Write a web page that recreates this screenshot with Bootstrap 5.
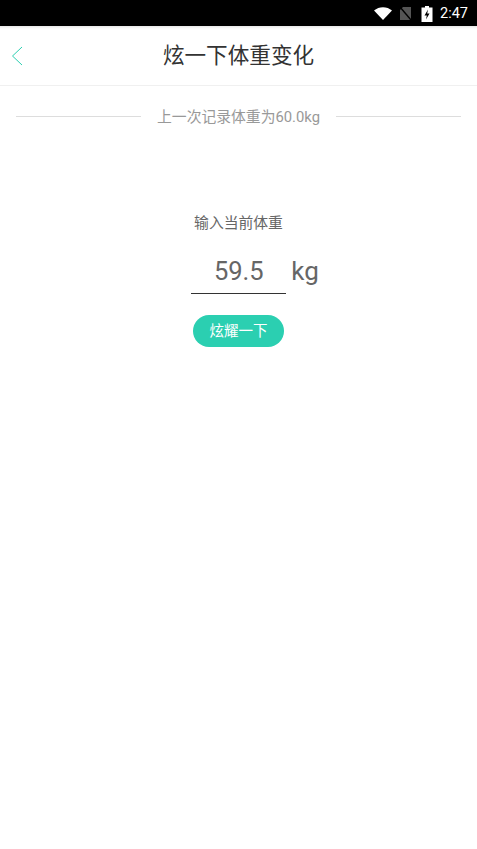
<!doctype html>
<html lang="zh">
<head>
<meta charset="utf-8">
<link href="https://cdn.jsdelivr.net/npm/bootstrap@5.3.0/dist/css/bootstrap.min.css" rel="stylesheet">
<style>
html,body{height:100%;}
body{font-family:Roboto,"Noto Sans CJK SC",sans-serif;background:#fff;color:#333;overflow:hidden;}
.status-strip{height:26px;background:#000;color:#fff;font-size:14.5px;padding:1px 9px 0 0;gap:7px;}
.status-time{line-height:26px;padding-top:1px;}
.batt-icon{margin-left:2px;}
.title-bar{height:60px;border-bottom:1px solid #f0f0f0;box-shadow:inset 0 4px 3px -3px rgba(0,0,0,.12);}
.title-text{font-size:21.6px;color:#333;line-height:1;}
.back-btn{left:11px;top:20px;line-height:0;}
.last-row{height:62px;padding:0 16px;gap:16px;color:#999;font-size:14.8px;}
.last-row hr{flex:1;margin:-1px 0 0;border:0;border-top:1px solid #ddd;opacity:1;}
.input-label{margin-top:65px;font-size:14.8px;color:#666;line-height:20px;}
.weight-row{margin-top:18px;margin-left:33px;}
.weight-box{width:95px;height:43px;border:0;border-bottom:1px solid #333;border-radius:0;padding:0 0 2px;font-size:25.5px;color:#666;text-align:center;box-shadow:none;}
.weight-unit{font-size:26px;color:#666;margin-left:5px;margin-top:0;line-height:40px;}
.boast-btn{margin-top:21px;width:91px;height:32px;padding:1px 0 0;border:0;border-radius:16px;background:#2bcfb1;color:#fff;font-size:14.5px;line-height:31px;}
</style>
</head>
<body>
<div class="status-strip d-flex align-items-center justify-content-end">
<svg width="18" height="13" viewBox="0 0 18 13"><path d="M0 3.5C5-1 13-1 18 3.5L9 13Z" fill="#fff"/></svg>
<svg width="13" height="15" viewBox="0 0 13 15"><path d="M4 1h8v13H1V4Z" fill="#555"/><path d="M1 1l11 13" stroke="#000" stroke-width="1.4"/></svg>
<svg class="batt-icon" width="12" height="16" viewBox="0 0 11 16"><path d="M3.5 0h4v1.5H11V16H0V1.5h3.5Z" fill="#fff"/><path d="M6.5 3.5 3 9.5h2.3L4.5 13.5 8 7.5H5.7Z" fill="#000"/></svg>
<span class="status-time">2:47</span>
</div>
<div class="title-bar position-relative d-flex align-items-center justify-content-center">
<a class="back-btn position-absolute" href="#" aria-label="返回"><svg width="12" height="20" viewBox="0 0 12 20"><path d="M11 1 1.5 10 11 19" fill="none" stroke="#2bcfb1" stroke-width="1"/></svg></a>
<span class="title-text">炫一下体重变化</span>
</div>
<div class="last-row d-flex align-items-center"><hr><span>上一次记录体重为60.0kg</span><hr></div>
<div class="d-flex flex-column align-items-center">
<div class="input-label">输入当前体重</div>
<div class="weight-row d-flex align-items-start">
<input class="form-control weight-box" value="59.5" aria-label="体重">
<span class="weight-unit">kg</span>
</div>
<button class="btn boast-btn" type="button">炫耀一下</button>
</div>
<script src="https://cdn.jsdelivr.net/npm/bootstrap@5.3.0/dist/js/bootstrap.bundle.min.js"></script>
</body>
</html>
